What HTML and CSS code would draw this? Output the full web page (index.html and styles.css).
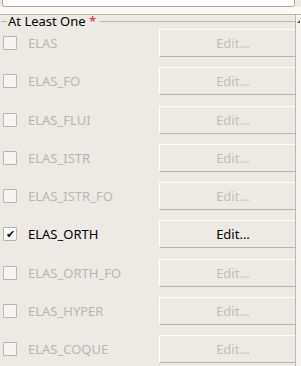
FILE: index.html
```html
<!DOCTYPE html>
<html lang="en">
    <head>
        <meta charset="UTF-8">
        <title>At Least One</title>
        <link rel="stylesheet" href="styles.css">
    </head>
    <body>
        <div class="search-box"></div>
        <div class="strip"></div>
        <div class="scroll-area">
            <div class="viewport">
                <div class="group-title">
                    <span class="line short"></span>
                    <span class="legend">At Least One <span class="req">*</span></span>
                    <span class="line"></span>
                </div>
                <div class="rows">
                    <div class="row off"><span class="check"></span><span class="name">ELAS</span><button disabled>Edit...</button></div>
                    <div class="row off"><span class="check"></span><span class="name">ELAS_FO</span><button disabled>Edit...</button></div>
                    <div class="row off"><span class="check"></span><span class="name">ELAS_FLUI</span><button disabled>Edit...</button></div>
                    <div class="row off"><span class="check"></span><span class="name">ELAS_ISTR</span><button disabled>Edit...</button></div>
                    <div class="row off"><span class="check"></span><span class="name">ELAS_ISTR_FO</span><button disabled>Edit...</button></div>
                    <div class="row on"><span class="check">&#10004;</span><span class="name">ELAS_ORTH</span><button>Edit...</button></div>
                    <div class="row off"><span class="check"></span><span class="name">ELAS_ORTH_FO</span><button disabled>Edit...</button></div>
                    <div class="row off"><span class="check"></span><span class="name">ELAS_HYPER</span><button disabled>Edit...</button></div>
                    <div class="row off"><span class="check"></span><span class="name">ELAS_COQUE</span><button disabled>Edit...</button></div>
                </div>
            </div>
            <div class="scrollbar"><span class="arrow"></span></div>
        </div>
    </body>
</html>
```

FILE: styles.css
```css
body {
    margin: 0;
    background-color: #edeae6;
    font-family: "Noto Sans", "Open Sans", sans-serif;
    font-size: 13px;
    color: #000;
    overflow: hidden;
    height: 366px;
}

.search-box {
    height: 19px;
    margin: -14px 6px 0 2px;
    background-color: #fff;
    border: 1px solid #aaa69f;
    border-radius: 3px;
}

.strip {
    height: 7px;
    background-color: #fcf8f4;
}

.scroll-area {
    display: flex;
    border-top: 1px solid #b9b5b0;
}

.viewport {
    flex: 1;
    min-width: 0;
    border-right: 1px solid #b9b5b0;
}

.scrollbar {
    width: 5px;
    background-color: #f6f4f1;
    position: relative;
}

.arrow {
    position: absolute;
    top: 5px;
    left: 1px;
    width: 0;
    height: 0;
    border-left: 3px solid transparent;
    border-bottom: 3px solid #555;
}

.group-title {
    display: flex;
    align-items: center;
    height: 18px;
    margin-top: -3px;
}

.line {
    flex: 1;
    border-top: 1px solid #b9b5b0;
    margin-top: 1px;
}

.line.short {
    flex: none;
    width: 6px;
    margin-left: 1px;
}

.legend {
    padding: 0 4px 0 1px;
    line-height: 18px;
}

.req {
    color: #e8201d;
}

.rows {
    display: flex;
    flex-direction: column;
    margin-top: -6px;
    overflow: hidden;
}

.row {
    display: flex;
    align-items: center;
    height: 38.25px;
    padding-left: 3px;
    flex: none;
}

.check {
    width: 12px;
    height: 12px;
    border: 1px solid #b8b4af;
    border-radius: 1px;
    background-color: #f7f5f3;
    font-size: 11px;
    line-height: 12px;
    text-align: center;
    flex: none;
}

.row.on .check {
    background-color: #fff;
    color: #111;
}

.name {
    width: 131px;
    margin-left: 11px;
    flex: none;
}

.row.off .name {
    color: #b9b6b1;
}

button {
    flex: none;
    width: 148px;
    height: 28px;
    background-color: #edeae6;
    border: 1px solid #b8b4af;
    border-top-color: #fff;
    border-left-color: #fff;
    font-family: inherit;
    font-size: 13px;
    color: #000;
    padding: 0;
}

button:disabled {
    color: #c2bfba;
}
```
